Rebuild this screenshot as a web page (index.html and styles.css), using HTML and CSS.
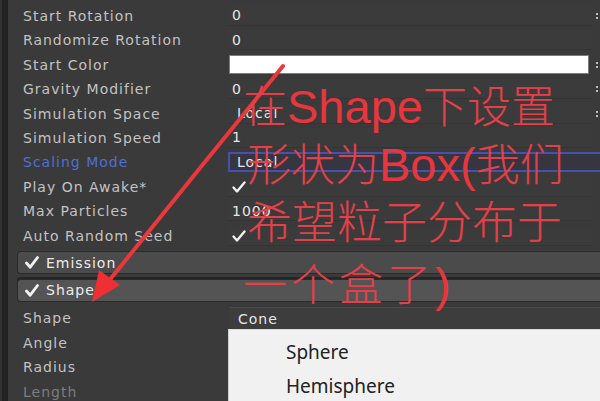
FILE: index.html
```html
<!DOCTYPE html>
<html lang="zh-CN">
<head>
<meta charset="utf-8">
<title>Particle System Inspector</title>
<link rel="stylesheet" href="styles.css">
</head>
<body>
<div class="window">
  <div class="gutter"></div>
  <div class="inspector">
    <div class="rows main">
      <div class="row"><span class="label">Start Rotation</span><div class="field"><span class="val">0</span></div><span class="mark"></span></div>
      <div class="row"><span class="label">Randomize Rotation</span><div class="field"><span class="val">0</span></div><span class="mark off"></span></div>
      <div class="row"><span class="label">Start Color</span><div class="field color"></div><span class="mark"></span></div>
      <div class="row"><span class="label">Gravity Modifier</span><div class="field"><span class="val">0</span></div><span class="mark"></span></div>
      <div class="row"><span class="label">Simulation Space</span><div class="field drop"><span class="val">Local</span></div><span class="mark"></span></div>
      <div class="row"><span class="label">Simulation Speed</span><div class="field"><span class="val">1</span></div><span class="mark off"></span></div>
      <div class="row"><span class="label blue">Scaling Mode</span><div class="field drop focus"><span class="val">Local</span></div></div>
      <div class="row"><span class="label">Play On Awake*</span><div class="field"><svg class="check" viewBox="0 0 14 12"><path d="M1.5 6.5 L5 10.5 L12.5 1.5"/></svg></div><span class="mark off"></span></div>
      <div class="row"><span class="label">Max Particles</span><div class="field"><span class="val">1000</span></div><span class="mark off"></span></div>
      <div class="row"><span class="label">Auto Random Seed</span><div class="field"><svg class="check" viewBox="0 0 14 12"><path d="M1.5 6.5 L5 10.5 L12.5 1.5"/></svg></div><span class="mark off"></span></div>
    </div>
    <div class="module emission"><svg class="mcheck" viewBox="0 0 14 13"><path d="M1.5 7 L5.2 11.2 L12.5 1.5"/></svg><span>Emission</span></div>
    <div class="module shape"><svg class="mcheck" viewBox="0 0 14 13"><path d="M1.5 7 L5.2 11.2 L12.5 1.5"/></svg><span>Shape</span></div>
    <div class="rows sub">
      <div class="row"><span class="label">Shape</span><div class="field drop cone"><span class="val">Cone</span></div></div>
      <div class="row"><span class="label">Angle</span><div class="field"></div></div>
      <div class="row"><span class="label">Radius</span><div class="field"></div></div>
      <div class="row"><span class="label dim">Length</span><div class="field"></div></div>
    </div>
  </div>

  <div class="popup">
    <div class="item">Sphere</div>
    <div class="item">Hemisphere</div>
  </div>

  <svg class="arrow" viewBox="0 0 600 401" width="600" height="401">
    <path class="shaft" d="M283 66 L 200 168 L 108 282"/>
    <polygon class="head" points="92,302 99,270 120,285"/>
  </svg>

  <div class="note">
    <div class="l1">在<span class="lat">Shape</span>下设置</div>
    <div class="l2">形状为<span class="lat">Box(</span>我们</div>
    <div class="l3">希望粒子分布于</div>
    <div class="l4">一个盒了<span class="lat">)</span></div>
  </div>
</div>
</body>
</html>
```

FILE: styles.css
```css
html, body {
  margin: 0;
  padding: 0;
}
body {
  width: 600px;
  height: 401px;
  overflow: hidden;
  background: #393939;
  font-family: "DejaVu Sans", "Liberation Sans", sans-serif;
}
.window {
  position: relative;
  width: 600px;
  height: 401px;
  display: flex;
  overflow: hidden;
}
.gutter {
  width: 6px;
  flex: none;
  background: #222222;
  border-left: 2px solid #313131;
}
.inspector {
  flex: 1;
  display: flex;
  flex-direction: column;
  background: #3a3a3a;
}
.inspector > * {
  flex-shrink: 0;
}
.rows.main {
  padding-top: 3.8px;
}
.row {
  display: grid;
  grid-template-columns: 220px 1fr 8px;
  height: 24.4px;
  align-items: center;
}
.label {
  padding-left: 15px;
  font-size: 14px;
  letter-spacing: 1px;
  color: #c2c2c2;
  white-space: nowrap;
}
.label.blue {
  color: #4f6fd3;
}
.label.dim {
  color: #7c7c7c;
}
.field {
  height: 20px;
  display: flex;
  align-items: center;
  padding-left: 4px;
  background: #3b3b3b;
  border-bottom: 1px solid #343434;
  box-sizing: border-box;
}
.val {
  font-size: 14px;
  letter-spacing: 1px;
  color: #e6e6e6;
  white-space: nowrap;
}
.field.drop {
  padding-left: 9px;
}
.field.color {
  background: #ffffff;
  border: 1px solid #7b7b7b;
  height: 19px;
  margin-left: 1px;
  margin-right: 3px;
}
.field.focus {
  grid-column: 2 / 4;
  border: 2px solid #4a4fae;
  padding-left: 7px;
  margin-right: -4px;
  background: #363640;
}
.check {
  width: 14px;
  height: 12px;
  margin-top: 2px;
}
.check path, .mcheck path {
  fill: none;
  stroke: #f2f2f2;
  stroke-width: 2.3;
  stroke-linecap: round;
  stroke-linejoin: round;
}
.mark {
  justify-self: end;
  width: 2px;
  height: 6px;
  margin-right: 2px;
  background: linear-gradient(#bdbdbd 0 2px, transparent 2px 4px, #bdbdbd 4px 6px);
}
.mark.off {
  background: none;
}
.module {
  margin-left: 9px;
  height: 23px;
  box-sizing: border-box;
  display: flex;
  align-items: center;
  gap: 7px;
  padding-left: 7px;
  border-radius: 4px 0 0 4px;
  border: 1px solid #2b2b2b;
  border-right: none;
  font-size: 14px;
  letter-spacing: 1px;
  color: #ececec;
}
.module.emission {
  margin-top: 3.7px;
  background: #4b4b4b;
}
.module.shape {
  margin-top: 4.5px;
  background: #545454;
  box-shadow: 0 -2px 0 #262626;
}
.mcheck {
  width: 14px;
  height: 13px;
}
.mcheck path {
  stroke-width: 2.8;
}
.rows.sub {
  margin-top: 4px;
}
.rows.sub .row {
  height: 24.5px;
}
.rows.sub .field {
  background: transparent;
  border-bottom: none;
}
.rows.sub .field.cone {
  grid-column: 2 / 4;
  height: 22px;
  margin-left: 1px;
  background: #3d3d3d;
  border-top: 1px solid #4a4a4a;
}
.popup {
  position: absolute;
  left: 228px;
  top: 329px;
  right: 0;
  bottom: 0;
  background: #f1f1f1;
  border-left: 1px solid #d0d0d0;
  border-top: 1px solid #dcdcdc;
  padding-top: 5px;
  box-sizing: border-box;
}
.item {
  height: 34px;
  line-height: 34px;
  padding-left: 57px;
  font-family: "Noto Sans", "Open Sans", sans-serif;
  font-size: 19px;
  color: #222222;
}
.arrow {
  position: absolute;
  left: 0;
  top: 0;
  pointer-events: none;
}
.arrow .shaft {
  fill: none;
  stroke: #e8383c;
  stroke-width: 4;
  stroke-linecap: round;
}
.arrow .head {
  fill: #ee3035;
}
.note {
  position: absolute;
  left: 243px;
  top: 78px;
  color: #e3404a;
  font-family: "Noto Sans CJK SC", "Noto Sans CJK JP", sans-serif;
  font-weight: 200;
  font-size: 44px;
  white-space: nowrap;
  pointer-events: none;
}
.note .lat {
  font-family: "Liberation Sans", Arial, sans-serif;
  font-weight: 400;
  font-size: 47px;
  color: #e8363f;
}
.note .l1 {
  height: 52px;
  line-height: 52px;
}
.note .l2 {
  height: 66px;
  line-height: 64px;
  padding-left: 4px;
}
.note .l3 {
  height: 48px;
  line-height: 48px;
  padding-left: 4px;
  font-size: 45px;
}
.note .l4 {
  height: 76px;
  line-height: 76px;
  letter-spacing: 4px;
}
```
